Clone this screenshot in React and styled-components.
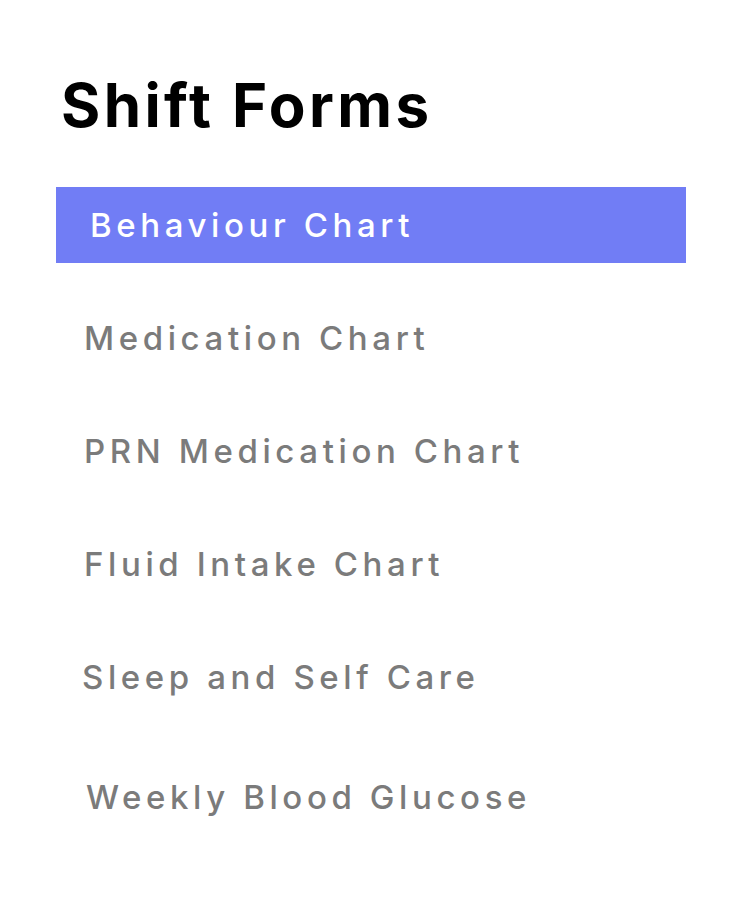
import React from "react";
import styled, { createGlobalStyle } from "styled-components";

const Global = createGlobalStyle`
  html, body { margin: 0; padding: 0; background: #ffffff; }
  body { font-family: Inter, "Open Sans", sans-serif; }
`;

const Panel = styled.nav`
  width: 630px;
  padding: 73px 0 0 56px;
  display: flex;
  flex-direction: column;
`;

const Title = styled.h1`
  margin: 0 0 0 5px;
  font-family: Inter, sans-serif;
  font-weight: 700;
  font-size: 60px;
  line-height: 64px;
  letter-spacing: 3.4px;
  color: #000;
`;

const List = styled.ul`
  list-style: none;
  margin: 50px 0 0 0;
  padding: 0;
  display: flex;
  flex-direction: column;
  gap: 37px;
`;

const Item = styled.li`
  height: 76px;
  display: flex;
  align-items: center;
  padding-left: ${(p) => p.$indent}px;
  margin-top: ${(p) => p.$shift || 0}px;
  background: ${(p) => (p.$active ? "#717df5" : "transparent")};
  color: ${(p) => (p.$active ? "#ffffff" : "#7b7b7b")};
  font-family: Inter, sans-serif;
  font-weight: 500;
  font-size: 33px;
  letter-spacing: 4.6px;
`;

const items = [
  { label: "Behaviour Chart", indent: 34, active: true },
  { label: "Medication Chart", indent: 28 },
  { label: "PRN Medication Chart", indent: 28 },
  { label: "Fluid Intake Chart", indent: 28 },
  { label: "Sleep and Self Care", indent: 26 },
  { label: "Weekly Blood Glucose", indent: 30, shift: 7 },
];

export default function App() {
  return (
    <>
      <Global />
      <Panel>
        <Title>Shift Forms</Title>
        <List>
          {items.map((it) => (
            <Item key={it.label} $indent={it.indent} $active={it.active} $shift={it.shift}>
              {it.label}
            </Item>
          ))}
        </List>
      </Panel>
    </>
  );
}
